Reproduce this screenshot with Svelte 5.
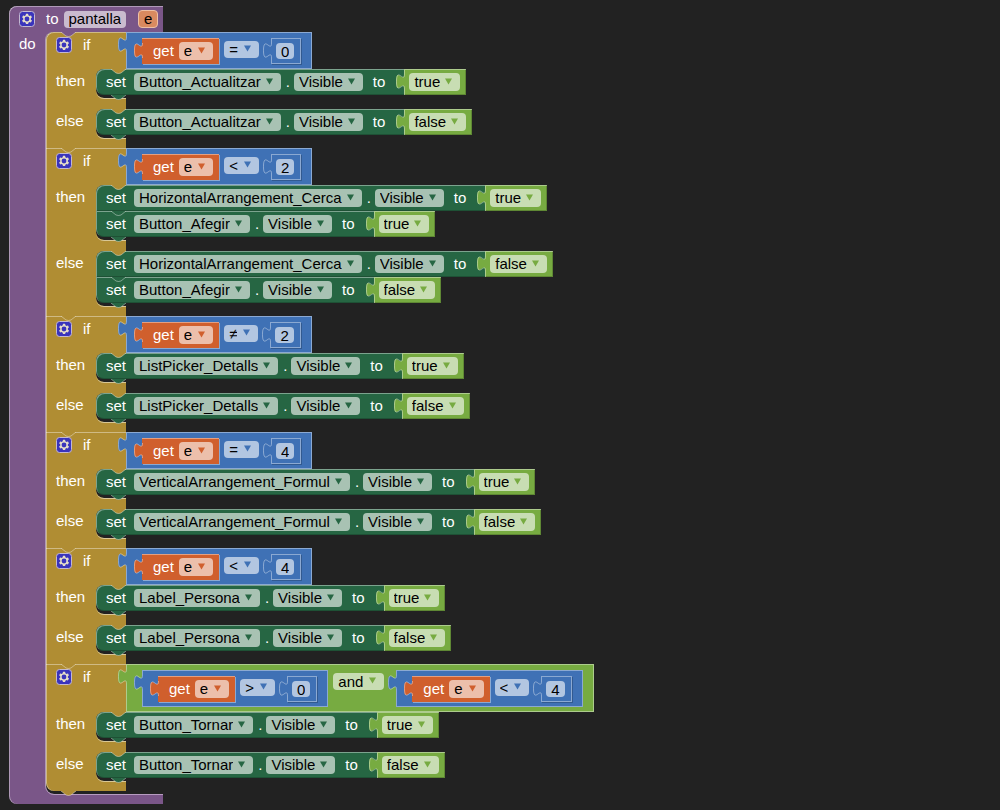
<script lang="ts">
  type Value =
    | { kind: 'get'; name: string }
    | { kind: 'number'; value: string }
    | { kind: 'bool'; value: string }
    | { kind: 'compare' | 'logic'; op: string; left: Value; right: Value };

  interface Setter {
    component: string;
    property: string;
    value: Value;
  }

  interface IfBlock {
    test: Value;
    then: Setter[];
    else: Setter[];
  }

  const choices: Record<string, string[]> = {
    get: ['e'],
    bool: ['true', 'false'],
    compare: ['=', '≠', '<', '>'],
    logic: ['and', 'or']
  };

  const properties = ['Visible', 'Width', 'Height'];

  const components = [
    'Button_Actualitzar',
    'Button_Afegir',
    'Button_Tornar',
    'HorizontalArrangement_Cerca',
    'Label_Persona',
    'ListPicker_Detalls',
    'VerticalArrangement_Formul'
  ];

  function compare(op: string, num: string): Value {
    return {
      kind: 'compare',
      op,
      left: { kind: 'get', name: 'e' },
      right: { kind: 'number', value: num }
    };
  }

  function show(component: string, value: string): Setter {
    return { component, property: 'Visible', value: { kind: 'bool', value } };
  }

  function branch(test: Value, ...names: string[]): IfBlock {
    return {
      test,
      then: names.map((n) => show(n, 'true')),
      else: names.map((n) => show(n, 'false'))
    };
  }

  let procName = $state('pantalla');
  let param = $state('e');

  let blocks: IfBlock[] = $state([
    branch(compare('=', '0'), 'Button_Actualitzar'),
    branch(compare('<', '2'), 'HorizontalArrangement_Cerca', 'Button_Afegir'),
    branch(compare('≠', '2'), 'ListPicker_Detalls'),
    branch(compare('=', '4'), 'VerticalArrangement_Formul'),
    branch(compare('<', '4'), 'Label_Persona'),
    branch(
      { kind: 'logic', op: 'and', left: compare('>', '0'), right: compare('<', '4') },
      'Button_Tornar'
    )
  ]);
</script>

{#snippet gear(label: string)}
  <button class="gear" aria-label={label}>
    <svg width="16" height="16" viewBox="0 0 16 16">
      <rect class="gear-box" x="0.5" y="0.5" width="15" height="15" rx="3" />
      <path
        class="gear-wheel"
        d="m4.203,7.296 0,1.368 -0.92,0.677 -0.11,0.41 0.9,1.59 0.41,0.11 1.043,-0.457 1.187,0.683 0.127,1.134 0.3,0.3 1.8,0 0.3,-0.299 0.127,-1.138 1.185,-0.682 1.046,0.458 0.409,-0.11 0.9,-1.59 -0.11,-0.41 -0.92,-0.677 0,-1.366 0.92,-0.677 0.11,-0.41 -0.9,-1.59 -0.409,-0.109 -1.046,0.458 -1.185,-0.682 -0.127,-1.138 -0.3,-0.3 -1.8,0 -0.3,0.3 -0.126,1.135 -1.187,0.682 -1.043,-0.457 -0.41,0.11 -0.899,1.59 0.108,0.409z"
      />
      <circle class="gear-hole" cx="8" cy="8" r="2.4" />
    </svg>
  </button>
{/snippet}

{#snippet arrow()}
  <svg class="arrow" width="7" height="7" viewBox="0 0 7 7"><path d="M0 0.5 H7 L3.5 6.5 Z" /></svg>
{/snippet}

<!-- puzzle tab on the left side of a value block -->
{#snippet tab()}
  <svg class="tab" width="9" height="16" viewBox="0 0 9 16">
    <path class="tab-fill" d="M9 0 H8 c0,10 -8,-8 -8,7.5 s8,-2.5 8,7.5 H9 Z" />
    <path class="tab-edge" d="M8.5 0 c0,10 -8,-8 -8,7.5 s8,-2.5 8,7.5" />
  </svg>
{/snippet}

<!-- bump that hangs below a statement block -->
{#snippet bump()}
  <svg class="bump" width="15" height="5" viewBox="0 0 15 5">
    <path class="bump-fill" d="M0 0 L5 4 Q7.5 5 10 4 L15 0 Z" />
    <path class="bump-edge" d="M0 0 L5 4 Q7.5 5 10 4 L15 0" />
  </svg>
{/snippet}

{#snippet valueBlock(v: Value)}
  <div class="value {v.kind}">
    {@render tab()}
    {#if v.kind === 'get'}
      <span>get</span>
      <div class="pill">
        <select aria-label="variable" bind:value={v.name}>
          {#each choices.get as c}<option>{c}</option>{/each}
        </select>
        {@render arrow()}
      </div>
    {:else if v.kind === 'number'}
      <input class="field" aria-label="number" bind:value={v.value} />
    {:else if v.kind === 'bool'}
      <div class="pill">
        <select aria-label="boolean" bind:value={v.value}>
          {#each choices.bool as c}<option>{c}</option>{/each}
        </select>
        {@render arrow()}
      </div>
    {:else}
      {@render valueBlock(v.left)}
      <div class="pill operator">
        <select aria-label="operator" bind:value={v.op}>
          {#each choices[v.kind] as c}<option>{c}</option>{/each}
        </select>
        {@render arrow()}
      </div>
      {@render valueBlock(v.right)}
    {/if}
  </div>
{/snippet}

{#snippet setters(list: Setter[])}
  <div class="stack set-stack">
    {@render bump()}
    {#each list as s}
      <div class="statement set">
        <span>set</span>
        <div class="pill component">
          <select aria-label="component" bind:value={s.component}>
            {#each components as c}<option>{c}</option>{/each}
          </select>
          {@render arrow()}
        </div>
        <span class="dot">.</span>
        <div class="pill">
          <select aria-label="property" bind:value={s.property}>
            {#each properties as p}<option>{p}</option>{/each}
          </select>
          {@render arrow()}
        </div>
        <span class="to">to</span>
        {@render valueBlock(s.value)}
        {@render bump()}
      </div>
    {/each}
  </div>
{/snippet}

<main class="workspace">
  <div class="procedure">
    <div class="proc-head">
      {@render gear('edit procedure')}
      <span>to</span>
      <input class="field name" aria-label="procedure name" bind:value={procName} />
      <input class="field param" aria-label="parameter" bind:value={param} />
    </div>
    <div class="proc-body">
      <span class="do">do</span>
      <div class="stack if-stack">
        {@render bump()}
        {#each blocks as b}
          <div class="statement if">
            <div class="row">
              <div class="if-head">
                {@render gear('edit if block')}
                <span>if</span>
              </div>
              {@render valueBlock(b.test)}
            </div>
            <div class="row">
              <span class="label">then</span>
              {@render setters(b.then)}
            </div>
            <div class="row">
              <span class="label">else</span>
              {@render setters(b.else)}
            </div>
            {@render bump()}
          </div>
        {/each}
      </div>
    </div>
  </div>
</main>

<style>
  :global(body) {
    margin: 0;
    background: #222;
  }

  .workspace {
    --purple: #7a5688;
    --gold: #b08d33;
    --green: #266643;
    --lime: #77ab41;
    --blue: #3f71b5;
    --orange: #d05f2d;
    --light: rgba(255, 255, 255, 0.4);
    --dark: rgba(0, 0, 0, 0.2);
    padding: 6px 9px;
    color: #fff;
    font-family: 'Liberation Sans', Arial, sans-serif;
    font-size: 15px;
    line-height: 26px;
    white-space: nowrap;
  }

  .procedure {
    --own: var(--purple);
    width: fit-content;
    padding-bottom: 10px;
    background: linear-gradient(var(--purple), var(--purple)) 0 0 / 154px 100% no-repeat;
    border-radius: 8px 0 0 8px;
    box-shadow: inset 1px 0 var(--light);
  }

  .proc-head {
    display: flex;
    align-items: center;
    box-sizing: border-box;
    width: 154px;
    height: 26px;
    padding-left: 10px;
    border-radius: 8px 0 0 0;
    box-shadow: inset 0 1px var(--light);
  }

  .proc-head span {
    margin: 0 5px 0 11px;
  }

  .proc-body {
    display: flex;
  }

  .do {
    box-sizing: border-box;
    width: 37px;
    padding-left: 10px;
    line-height: 24px;
  }

  .stack {
    position: relative;
    padding-bottom: 3px;
    background: #222;
    border-radius: 8px 0 0 8px;
    box-shadow: -1px 0 var(--light);
  }

  .set-stack {
    --own: var(--gold);
    margin-bottom: 11px;
    box-shadow: none;
  }

  .row:nth-of-type(3) .set-stack {
    margin-bottom: 10px;
  }

  .set-stack::after,
  .if-stack::after {
    content: '';
    position: absolute;
    left: 0;
    bottom: -1px;
    width: 30px;
    height: 10px;
    box-sizing: border-box;
    border-bottom: 1px solid #d8c796;
    border-bottom-left-radius: 8px;
  }

  .if-stack::after {
    width: 117px;
    border-color: #b79bc0;
  }

  .statement {
    position: relative;
    background-color: var(--own);
    box-shadow: inset 0 1px var(--light);
  }

  .statement:first-of-type {
    border-top-left-radius: 8px;
  }

  .statement:last-of-type {
    border-bottom-left-radius: 8px;
  }

  .if {
    --own: var(--gold);
    background: linear-gradient(var(--gold), var(--gold)) 0 0 / 80px 100% no-repeat;
    box-shadow: inset 1px 0 var(--light);
  }

  .if::before {
    content: '';
    position: absolute;
    top: 0;
    left: 0;
    width: 80px;
    height: 10px;
    border-top-left-radius: inherit;
    box-shadow: inset 0 1px var(--light);
  }

  .row {
    display: flex;
    align-items: flex-start;
  }

  .if-head {
    display: flex;
    align-items: center;
    gap: 11px;
    box-sizing: border-box;
    width: 80px;
    height: 26px;
    padding-left: 10px;
  }

  .label {
    box-sizing: border-box;
    width: 50px;
    padding-left: 10px;
    line-height: 24px;
  }

  .set {
    --own: var(--green);
    display: flex;
    align-items: center;
    width: fit-content;
    height: 26px;
    padding-left: 10px;
    box-shadow: inset 1px 1px var(--light), inset 0 -1px var(--dark);
  }

  .component {
    margin-left: 8px;
  }

  .dot {
    margin: 0 4px 0 5px;
  }

  .to {
    margin: 0 19px 0 10px;
  }

  .value {
    position: relative;
    display: flex;
    align-items: flex-start;
    background: var(--own);
    box-shadow: inset 1px 1px var(--light), inset -1px -1px var(--dark);
  }

  .get,
  .number,
  .bool {
    align-items: center;
    height: 26px;
  }

  .get {
    --own: var(--orange);
    gap: 5px;
    padding: 0 6px 0 11px;
    box-shadow: inset 0 1px var(--light), 1px 1px var(--light);
  }

  .number {
    --own: var(--blue);
    padding: 0 7px 0 5px;
    box-shadow: inset 0 0 0 1px var(--light), 1px 1px var(--dark);
  }

  .bool {
    --own: var(--lime);
    padding: 0 6px 0 5px;
  }

  .compare {
    --own: var(--blue);
    padding: 6px 11px 5px 16px;
    box-shadow: inset 0 0 0 1px var(--light);
  }

  .logic {
    --own: var(--lime);
    padding: 6px 11px 5px 16px;
    box-shadow: inset 0 0 0 1px var(--light);
  }

  .pill {
    position: relative;
    display: flex;
    height: 18px;
    border-radius: 4px;
    background: rgba(255, 255, 255, 0.6);
  }

  .operator {
    height: 17px;
    margin: 3px 12px 0 5px;
  }

  select,
  input {
    field-sizing: content;
    appearance: none;
    box-sizing: border-box;
    height: 100%;
    margin: 0;
    padding: 0 20px 1px 5px;
    border: none;
    border-radius: 4px;
    outline: none;
    background: none;
    color: #000;
    font: inherit;
    line-height: 17px;
  }

  .get select,
  .operator select {
    padding-right: 21px;
  }

  .field {
    height: 16px;
    padding: 0 5px;
    background: rgba(255, 255, 255, 0.6);
  }

  .name {
    height: 17px;
    padding-bottom: 1px;
  }

  .param {
    height: 18px;
    margin-left: 12px;
    padding-bottom: 1px;
    border: 1px solid #edc0a5;
    background: #d98a60;
  }

  .arrow {
    position: absolute;
    top: 5px;
    right: 8px;
    fill: var(--own);
    pointer-events: none;
  }

  .operator .arrow {
    top: 4px;
  }

  .tab {
    position: absolute;
    top: 5px;
    left: -8px;
  }

  .tab-fill,
  .bump-fill {
    fill: var(--own);
  }

  .tab-edge,
  .bump-edge {
    fill: none;
    stroke: var(--light);
  }

  .bump {
    position: absolute;
    top: 0;
    left: 15px;
    z-index: 1;
  }

  .statement > .bump {
    top: 100%;
  }

  .gear {
    display: flex;
    padding: 0;
    border: none;
    background: none;
    cursor: pointer;
  }

  .gear-box {
    fill: #3a34bc;
    stroke: #c3b8d2;
  }

  .gear-wheel {
    fill: #e4dcc8;
  }

  .gear-hole {
    fill: #3a34bc;
  }
</style>
